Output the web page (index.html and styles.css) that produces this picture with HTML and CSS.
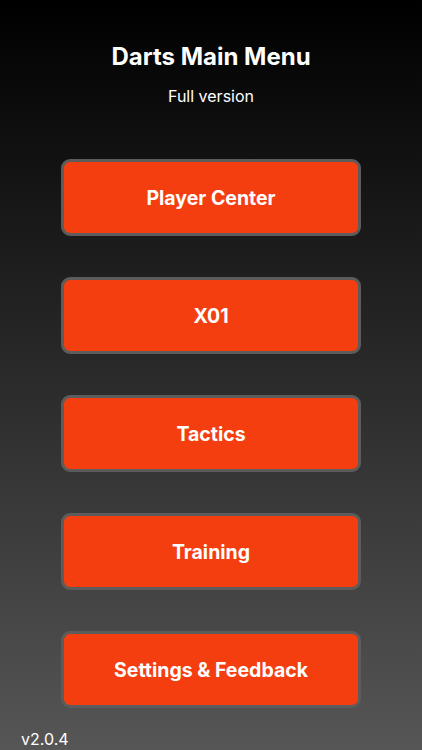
FILE: index.html
```html
<!DOCTYPE html>
<html lang="en">
<head>
    <meta charset="UTF-8">
    <meta name="viewport" content="width=device-width, initial-scale=1.0">
    <title>Darts Main Menu</title>
    <link rel="stylesheet" href="styles.css">
</head>
<body>

    <!-- Header -->
    <div class="header">
        <h1>Darts Main Menu</h1>
        <p class="subtitle">Full version</p>
    </div>

    <!-- Menu buttons -->
    <div class="menu">
        <button class="menu-button">Player Center</button>
        <button class="menu-button">X01</button>
        <button class="menu-button">Tactics</button>
        <button class="menu-button">Training</button>
        <button class="menu-button">Settings &amp; Feedback</button>
    </div>

    <p class="version">v2.0.4</p>

</body>
</html>
```

FILE: styles.css
```css
html, body {
    height: 750px;
}
body {
    margin: 0;
    font-family: Inter, "Noto Sans", sans-serif;
    color: white;
    background: linear-gradient(to bottom, #000000 0%, #2a2a2a 50%, #565656 100%);
    overflow: hidden;
}
.header {
    text-align: center;
    padding-top: 42px;
}
.header h1 {
    margin: 0;
    font-size: 24px;
    font-weight: 700;
    line-height: 30px;
}
.subtitle {
    margin: 14px 0 0;
    font-size: 16px;
    line-height: 20px;
}
.menu {
    display: flex;
    flex-direction: column;
    align-items: center;
    gap: 41px;
    margin-top: 53px;
}
.menu-button {
    box-sizing: border-box;
    width: 300px;
    height: 77px;
    background-color: #f43e10;
    border: 3px solid #5c5c5c;
    border-radius: 9px;
    color: white;
    font-family: Inter, "Noto Sans", sans-serif;
    font-size: 19.5px;
    font-weight: 700;
    cursor: pointer;
}
.version {
    margin: 21px 0 0 21px;
    font-size: 16px;
    line-height: 20px;
}
```
